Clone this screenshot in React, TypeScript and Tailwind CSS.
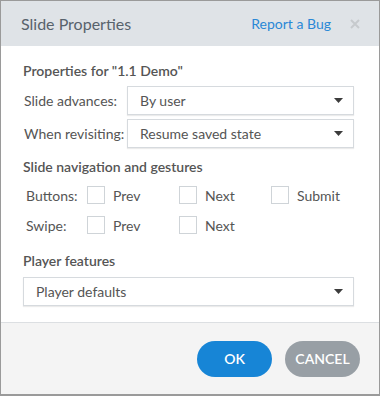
import React from 'react';

// Small caret used inside the select boxes
const Caret = () => (
  <svg width="9" height="5" viewBox="0 0 9 5" className="shrink-0">
    <path d="M0 0 L9 0 L4.5 5 Z" fill="#3c3c3c" />
  </svg>
);

const SelectBox = ({ value, className = '' }: { value: string; className?: string }) => (
  <div
    className={`h-[29px] flex items-center justify-between pl-[12px] pr-[10px] bg-white border border-[#d6dade] shadow-[0_1px_1px_rgba(0,0,0,0.08)] text-[14px] text-[#555] ${className}`}
  >
    <span className="whitespace-nowrap">{value}</span>
    <Caret />
  </div>
);

const Check = ({ label }: { label: string }) => (
  <div className="flex items-center w-[92px] shrink-0">
    <span className="w-[18px] h-[18px] border border-[#cfd4d8] bg-white shrink-0" />
    <span className="ml-[8px] text-[14px] text-[#555] whitespace-nowrap">{label}</span>
  </div>
);

export default function App() {
  return (
    <div
      className="w-[380px] h-[396px] flex flex-col border border-[#9a9a9a] border-b-2 bg-white overflow-hidden"
      style={{ fontFamily: 'Lato, "Open Sans", sans-serif' }}
    >
      {/* Header */}
      <div className="h-[45px] shrink-0 bg-[#dfe3e7] flex items-center justify-between pl-[20px] pr-[19px]">
        <span className="text-[16px] text-[#57626c]">Slide Properties</span>
        <div className="flex items-center gap-[19px]">
          <span className="text-[14px] text-[#2a88d6]">Report a Bug</span>
          <svg width="10" height="10" viewBox="0 0 10 10">
            <path d="M1 1 L9 9 M9 1 L1 9" stroke="#c6cacd" strokeWidth="2" />
          </svg>
        </div>
      </div>

      {/* Body */}
      <div className="flex-1 px-[22px] pt-[15px]">
        <div className="text-[14px] font-semibold text-[#555] leading-[20px]">Properties for "1.1 Demo"</div>

        <div className="mt-[5px] flex flex-col gap-[4px]">
          <div className="flex items-center">
            <span className="w-[104px] shrink-0 pl-[1px] text-[14px] text-[#555] whitespace-nowrap">Slide advances:</span>
            <SelectBox value="By user" className="w-[227px]" />
          </div>
          <div className="flex items-center">
            <span className="w-[104px] shrink-0 pl-[1px] text-[14px] text-[#555] whitespace-nowrap">When revisiting:</span>
            <SelectBox value="Resume saved state" className="w-[227px]" />
          </div>
        </div>

        <div className="mt-[9px] text-[14px] font-semibold text-[#555] leading-[20px]">Slide navigation and gestures</div>

        <div className="mt-[8px] flex flex-col gap-[10px]">
          <div className="flex items-center h-[20px]">
            <span className="w-[64px] shrink-0 pl-[3px] text-[14px] text-[#555]">Buttons:</span>
            <Check label="Prev" />
            <Check label="Next" />
            <Check label="Submit" />
          </div>
          <div className="flex items-center h-[20px]">
            <span className="w-[64px] shrink-0 pl-[3px] text-[14px] text-[#555]">Swipe:</span>
            <Check label="Prev" />
            <Check label="Next" />
          </div>
        </div>

        <div className="mt-[16px] text-[14px] font-semibold text-[#555] leading-[20px]">Player features</div>
        <SelectBox value="Player defaults" className="mt-[6px] w-[331px]" />
      </div>

      {/* Footer */}
      <div className="h-[72px] shrink-0 border-t border-[#dcdfe2] bg-[#f4f4f4] flex items-center justify-end gap-[13px] pr-[19px]">
        <button className="w-[75px] h-[36px] rounded-full bg-[#1785d6] text-white text-[14px] font-semibold">OK</button>
        <button className="w-[75px] h-[36px] rounded-full bg-[#989fa5] text-white text-[14px] font-semibold">CANCEL</button>
      </div>
    </div>
  );
}
